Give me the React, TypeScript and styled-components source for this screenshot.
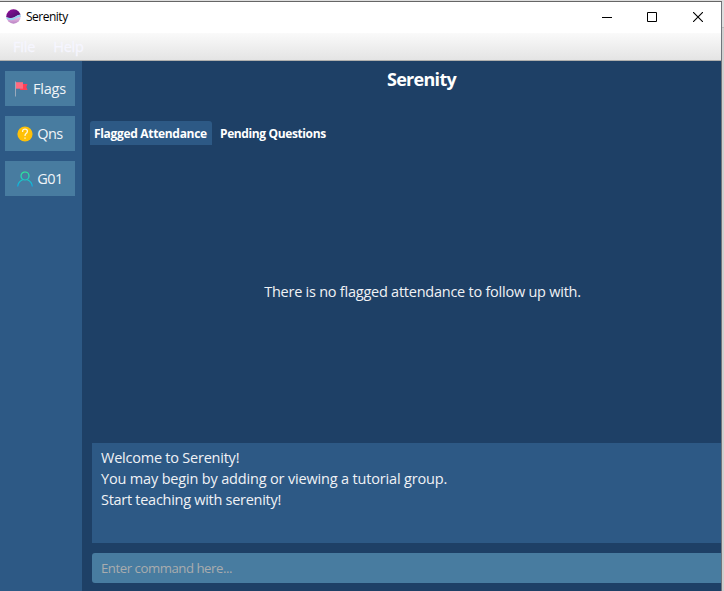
import React from 'react';
import styled, { createGlobalStyle } from 'styled-components';

const GlobalStyle = createGlobalStyle`
  * { box-sizing: border-box; }
  body { margin: 0; overflow: hidden; background: #d5d5d5; font-family: "Open Sans", "Noto Sans", sans-serif; }
`;

const Desktop = styled.div`
  width: 724px;
  height: 591px;
  padding-top: 1px;
  background: linear-gradient(#dedede 0 27px, #bababa 27px 28px, #d0d0d0 28px);
`;

const AppWindow = styled.div`
  width: 722px;
  height: 590px;
  display: flex;
  flex-direction: column;
  border-top: 1px solid #666;
  border-right: 1px solid #71757b;
`;

const TitleBar = styled.header`
  height: 31px;
  flex: none;
  display: flex;
  align-items: center;
  padding: 0 0 2px 6px;
  background: #fff;
`;

const WindowTitle = styled.span`
  flex: 1;
  margin: 0 0 0 5px;
  font-size: 12px;
  letter-spacing: -0.5px;
  color: #000;
`;

const Controls = styled.div`
  display: flex;
  height: 28px;
`;

const ControlButton = styled.button`
  width: 46px;
  height: 28px;
  padding: 0;
  border: 0;
  background: none;
  display: grid;
  place-items: center;
`;

const MenuBar = styled.nav`
  height: 28px;
  flex: none;
  display: flex;
  align-items: center;
  gap: 18px;
  padding: 1px 0 0 13px;
  background: linear-gradient(#fafafa, #e4e4e4);
  border-bottom: 1px solid #b0b0ae;
`;

const MenuItem = styled.span<{ $spacing: number }>`
  font-size: 14.5px;
  line-height: 20px;
  letter-spacing: ${p => p.$spacing}px;
  color: #f6f6ff;
  -webkit-text-stroke: 0.3px #f6f6ff;
`;

const Body = styled.div`
  flex: 1;
  display: flex;
  min-height: 0;
`;

const Sidebar = styled.aside`
  width: 82px;
  flex: none;
  display: flex;
  flex-direction: column;
  gap: 10px;
  padding: 10px 7px 0 5px;
  background: #2d5985;
`;

const SideButton = styled.button<{ $spacing: number }>`
  height: 35px;
  flex: none;
  border: 0;
  padding: 0;
  display: flex;
  align-items: center;
  justify-content: center;
  gap: 4px;
  background: #487ca0;
  color: #f0f4f8;
  font: 14.5px/20px "Open Sans", sans-serif;
  letter-spacing: ${p => p.$spacing}px;
`;

const Main = styled.main`
  flex: 1;
  min-width: 0;
  display: flex;
  flex-direction: column;
  background: #1e4066;
`;

const Heading = styled.h1`
  margin: 0;
  height: 60px;
  padding: 5px 0 0 40px;
  text-align: center;
  font-size: 18px;
  line-height: 26px;
  font-weight: 700;
  letter-spacing: -0.7px;
  color: #fff;
`;

const Tabs = styled.div`
  display: flex;
  padding-left: 8px;
  gap: 4px;
`;

const Tab = styled.div<{ $active?: boolean; $width: number }>`
  width: ${p => p.$width}px;
  height: 24px;
  padding-left: 4px;
  border-radius: 3px 3px 0 0;
  background: ${p => (p.$active ? '#2d5985' : 'transparent')};
  font-size: 12px;
  line-height: 25px;
  font-weight: 700;
  letter-spacing: ${p => (p.$active ? -0.32 : -0.38)}px;
  white-space: nowrap;
  color: #fff;
`;

const EmptyState = styled.div`
  height: 298px;
  flex: none;
  display: flex;
  align-items: center;
  justify-content: center;
  padding: 0 0 5px 42px;
  font-size: 14.5px;
  letter-spacing: -0.24px;
  color: #f0f2f5;
`;

const Message = styled.p`
  margin: 0;
  white-space: nowrap;
`;

const ResultBox = styled.section`
  height: 100px;
  flex: none;
  margin-left: 10px;
  padding: 4px 9px;
  background: #2d5985;
  color: #f0f2f5;
  font-size: 14.5px;
  line-height: 21px;
`;

const Line = styled.div<{ $spacing: number }>`
  letter-spacing: ${p => p.$spacing}px;
  white-space: nowrap;
`;

const CommandInput = styled.input`
  height: 30px;
  margin: 10px 0 0 10px;
  padding: 0 9px;
  border: 0;
  border-radius: 3px 0 0 3px;
  outline: none;
  background: #487ca0;
  color: #fff;
  font: 13.2px "Open Sans", sans-serif;
  letter-spacing: -0.46px;
  &::placeholder { color: #a9acae; opacity: 1; }
`;

const Logo = () => (
  <svg width="15" height="15" viewBox="0 0 15 15">
    <defs>
      <clipPath id="disc"><circle cx="7.5" cy="7.5" r="7.2" /></clipPath>
      <linearGradient id="sky" x1="0" y1="0" x2="1" y2="1">
        <stop offset="0" stopColor="#98109f" /><stop offset="1" stopColor="#3c1065" />
      </linearGradient>
      <linearGradient id="sea" x1="0" y1="0" x2="0" y2="1">
        <stop offset="0.5" stopColor="#f3c6e6" /><stop offset="1" stopColor="#b67fc4" />
      </linearGradient>
    </defs>
    <g clipPath="url(#disc)">
      <rect width="15" height="15" fill="url(#sea)" />
      <path d="M0 0h15v5.6Q12 5.8 9.5 7.6T4 9 0 8z" fill="url(#sky)" />
      <path d="M0 8Q4 10 7 8.9T10.5 7 15 5.6v2.5Q12 7.6 9.5 9.6T4 11 0 10z" fill="#91d5ef" />
    </g>
  </svg>
);

const FlagIcon = () => (
  <svg width="15" height="16" viewBox="0 0 15 16">
    <path d="M1.5 .5v15" stroke="#9aa9bb" />
    <path d="M7 3h6.5l-1.2 3 1.2 3H6z" fill="#ff3f56" />
    <path d="M2 1.2h7v6.5H2z" fill="#ff6b80" />
  </svg>
);

const QuestionIcon = () => (
  <svg width="16" height="16" viewBox="0 0 16 16">
    <circle cx="8" cy="8" r="7.6" fill="#ffc107" />
    <path d="M5.6 6V5.3Q5.6 3.2 8 3.2t2.4 2.1Q10.4 6.8 8.9 7.6 8 8.2 8 10M8 11.4v1.4" fill="none" stroke="#fff7da" strokeWidth="1.3" />
  </svg>
);

const PersonIcon = () => (
  <svg width="16" height="16" viewBox="0 0 16 16">
    <defs>
      <linearGradient id="person" gradientUnits="userSpaceOnUse" x1="0" y1="1" x2="0" y2="16">
        <stop offset="0" stopColor="#2af598" /><stop offset="1" stopColor="#08a9ed" />
      </linearGradient>
    </defs>
    <g fill="none" stroke="url(#person)" strokeWidth="1.2">
      <circle cx="8" cy="5" r="4" />
      <path d="M.7 15.5C1 11.7 3 9.9 5.7 8.8M15.3 15.5C15 11.7 13 9.9 10.3 8.8" />
    </g>
  </svg>
);

export default function App() {
  return (
    <>
      <GlobalStyle />
      <Desktop>
        <AppWindow>
          <TitleBar>
            <Logo />
            <WindowTitle>Serenity</WindowTitle>
            <Controls>
              <ControlButton aria-label="Minimize">
                <svg width="12" height="10"><path d="M2 5.5h10" stroke="#000" /></svg>
              </ControlButton>
              <ControlButton aria-label="Maximize">
                <svg width="10" height="10"><path d="M.5.5h9v9h-9z" fill="none" stroke="#000" /></svg>
              </ControlButton>
              <ControlButton aria-label="Close">
                <svg width="10" height="10"><path d="M0 0l10 10M10 0L0 10" stroke="#000" strokeWidth="1.1" /></svg>
              </ControlButton>
            </Controls>
          </TitleBar>
          <MenuBar>
            <MenuItem $spacing={-0.2}>File</MenuItem>
            <MenuItem $spacing={-0.2}>Help</MenuItem>
          </MenuBar>
          <Body>
            <Sidebar>
              <SideButton $spacing={-0.2}><FlagIcon />Flags</SideButton>
              <SideButton $spacing={-0.5}><QuestionIcon />Qns</SideButton>
              <SideButton $spacing={-0.5}><PersonIcon />G01</SideButton>
            </Sidebar>
            <Main>
              <Heading>Serenity</Heading>
              <Tabs>
                <Tab $active $width={122}>Flagged Attendance</Tab>
                <Tab $width={116}>Pending Questions</Tab>
              </Tabs>
              <EmptyState>
                <Message>There is no flagged attendance to follow up with.</Message>
              </EmptyState>
              <ResultBox>
                <Line $spacing={-0.23}>Welcome to Serenity!</Line>
                <Line $spacing={-0.17}>You may begin by adding or viewing a tutorial group.</Line>
                <Line $spacing={-0.28}>Start teaching with serenity!</Line>
              </ResultBox>
              <CommandInput placeholder="Enter command here..." />
            </Main>
          </Body>
        </AppWindow>
      </Desktop>
    </>
  );
}
